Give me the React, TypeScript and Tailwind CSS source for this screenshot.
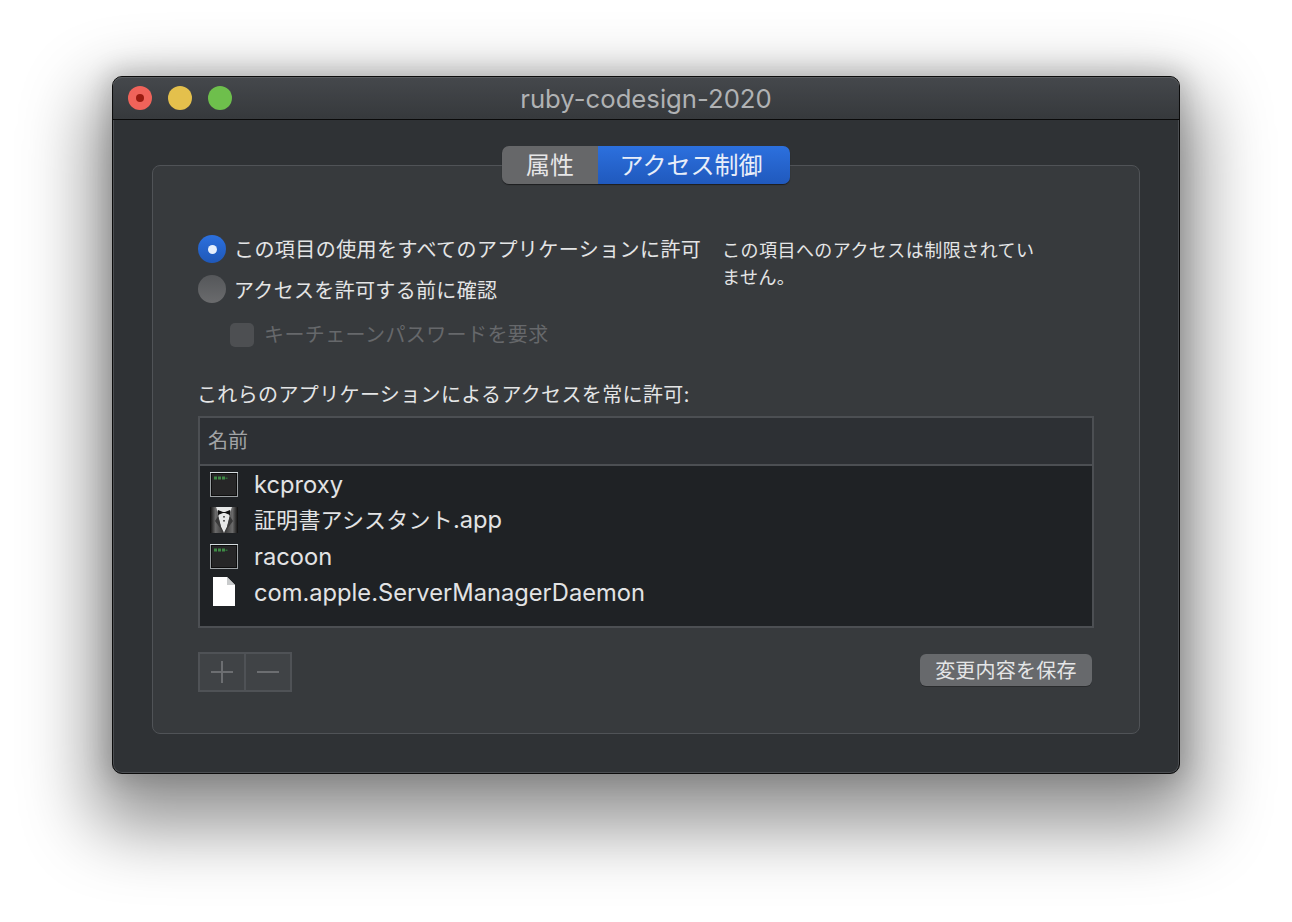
import type { ReactNode } from 'react'

const UI_FONT = 'font-["Inter","Noto_Sans_CJK_JP",sans-serif]'
const JP_FONT = 'font-["Noto_Sans_CJK_JP",sans-serif]'

function TerminalIcon() {
  return (
    <svg width="28" height="25" viewBox="0 0 28 25" className="shrink-0">
      <rect x="0.5" y="0.5" width="27" height="24" fill="#262627" stroke="#9ba0a3" />
      <path d="M0 0.5 H28" stroke="#d5dde0" />
      <rect x="1" y="1" width="26" height="1" fill="#0d0d0d" />
      <rect x="1" y="23" width="26" height="1" fill="#0d0d0d" />
      <rect x="1" y="2" width="1" height="21" fill="#0d0d0d" />
      <rect x="26" y="2" width="1" height="21" fill="#0d0d0d" />
      <path d="M4 4.5 h3 v3 h-3 Z M8 4.5 h3 v3 h-3 Z M12 4.5 h3 v3 h-3 Z" fill="#3f8a46" />
      <path d="M15.5 5.5 h2 v1.5 h-2 Z" fill="#2f6a38" />
    </svg>
  )
}

function TuxedoIcon() {
  return (
    <svg width="28" height="26" viewBox="0 0 28 26" className="shrink-0">
      <defs>
        <linearGradient id="suit" x1="0" x2="1" y1="0" y2="0">
          <stop offset="0" stopColor="#0c0c0c" />
          <stop offset="0.2" stopColor="#6b6b6b" />
          <stop offset="0.5" stopColor="#333" />
          <stop offset="0.8" stopColor="#6b6b6b" />
          <stop offset="1" stopColor="#0c0c0c" />
        </linearGradient>
      </defs>
      <rect width="28" height="26" fill="url(#suit)" />
      <path d="M6 0 H22 L17 20 L14 26 L11 20 Z" fill="#e6e8e8" />
      <path d="M6 0 L11 20 L14 26 L5 14 L9 8 Z" fill="#3a3a3a" />
      <path d="M22 0 L17 20 L14 26 L23 14 L19 8 Z" fill="#3a3a3a" />
      <path d="M8 3 L13 5 H15 L20 3 V8 L15 6 H13 L8 8 Z" fill="#121212" />
      <rect x="13.3" y="9" width="1.4" height="1.6" fill="#222" />
      <rect x="13.3" y="13" width="1.4" height="1.6" fill="#222" />
    </svg>
  )
}

function DocumentIcon() {
  return (
    <svg width="28" height="30" viewBox="0 0 28 30" className="shrink-0">
      <path d="M3 0 H17 L25 8 V29 H3 Z" fill="#ffffff" />
      <path d="M17 0 L25 8 H17 Z" fill="#c9cbcc" />
    </svg>
  )
}

function AppRow({
  icon,
  children,
  cjk = false,
}: {
  icon: ReactNode
  children: ReactNode
  cjk?: boolean
}) {
  return (
    <div className="flex h-9 items-center gap-[16px] pl-[10px]">
      <div className="flex w-[28px] items-center justify-center">{icon}</div>
      <span className={`${UI_FONT} ${cjk ? 'pb-[2px]' : 'pt-[2px]'} text-[23.7px] leading-none text-[#e2e3e4]`}>
        {children}
      </span>
    </div>
  )
}

export default function App() {
  return (
    <div className="h-[922px] w-[1292px] overflow-hidden bg-white pl-[112px] pt-[76px]">
      <div className="flex h-[698px] w-[1068px] flex-col rounded-[10px] border border-[#0c0c0c] bg-[#2f3235] shadow-[inset_0_0_0_1px_#4b4e52,0_34px_70px_20px_rgba(0,0,0,0.42),0_0_24px_6px_rgba(0,0,0,0.16)]">
        <div className="relative flex h-[43px] shrink-0 items-center gap-[16px] rounded-t-[9px] border-b border-[#0a0a0a] bg-gradient-to-b from-[#45484c] to-[#36393c] pl-[15px] shadow-[inset_0_1px_0_#5a5d60]">
          <div className="flex h-6 w-6 items-center justify-center rounded-full bg-[#f0635a]">
            <div className="h-2 w-2 rounded-full bg-[#9a1b10]" />
          </div>
          <div className="h-6 w-6 rounded-full bg-[#e4c04c]" />
          <div className="h-6 w-6 rounded-full bg-[#6ebf4c]" />
          <div className={`${UI_FONT} absolute inset-x-0 top-0 text-center text-[25.7px] leading-[43px] text-[#b0b2b4]`}>
            ruby-codesign-2020
          </div>
        </div>

        <div className="px-[39px] pt-[45px]">
          <div className="relative flex h-[569px] w-[988px] flex-col rounded-[8px] border border-[#505357] bg-[#373a3d] pl-[45px] pr-[45px] pt-[69px]">
            <div className={`${JP_FONT} absolute left-[349px] top-[-20px] flex h-[38px] w-[288px] overflow-hidden rounded-[7px] text-[24px] leading-none shadow-[0_1px_1px_rgba(0,0,0,0.5)]`}>
              <div className="flex w-[96px] items-center justify-center bg-[#666769] pb-[3px] text-[#e6e6e7]">属性</div>
              <div className="flex flex-1 items-center justify-center bg-gradient-to-b from-[#2c70de] to-[#2059bd] pb-[3px] pr-[6px] text-[#e8eef9]">
                アクセス制御
              </div>
            </div>

            <div className="flex">
              <div className="w-[525px] shrink-0">
                <div className="flex h-[28px] items-center gap-[8px]">
                  <div className="flex h-[28px] w-[28px] items-center justify-center rounded-full bg-gradient-to-b from-[#2c70de] to-[#1f58b8]">
                    <div className="h-[9px] w-[9px] rounded-full bg-[#e6effc]" />
                  </div>
                  <span className={`${JP_FONT} whitespace-nowrap text-[20px] leading-none tracking-[0.43px] text-[#e4e5e6]`}>
                    この項目の使用をすべてのアプリケーションに許可
                  </span>
                </div>
                <div className="mt-[12px] flex h-[28px] items-center gap-[8px]">
                  <div className="h-[28px] w-[28px] rounded-full bg-gradient-to-b from-[#55575a] to-[#6a6b6d]" />
                  <span className={`${JP_FONT} whitespace-nowrap pt-[2px] text-[20px] leading-none tracking-[0.33px] text-[#e4e5e6]`}>
                    アクセスを許可する前に確認
                  </span>
                </div>
                <div className="ml-[32px] mt-[20px] flex h-[24px] items-center gap-[10px]">
                  <div className="h-[24px] w-[24px] rounded-[5px] bg-[#4d4f52]" />
                  <span className={`${JP_FONT} whitespace-nowrap pb-[3px] text-[20px] leading-none tracking-[0.4px] text-[#66686b]`}>
                    キーチェーンパスワードを要求
                  </span>
                </div>
              </div>
              <p className={`${JP_FONT} -ml-[1px] w-[320px] pt-[1px] text-[18px] leading-[27px] tracking-[0.47px] text-[#e4e5e6]`}>
                この項目へのアクセスは制限されていません。
              </p>
            </div>

            <div className={`${JP_FONT} -ml-[1px] mt-[33px] text-[20px] leading-[28px] tracking-[0.36px] text-[#e4e5e6]`}>
              これらのアプリケーションによるアクセスを常に許可:
            </div>

            <div className="mt-[8px] h-[212px] border-2 border-[#4c4f53] bg-[#1f2225]">
              <div className={`${JP_FONT} flex h-[48px] items-center border-b-2 border-[#4c4f53] bg-[#2d3034] pb-[3px] pl-[8px] text-[20px] text-[#a2a4a6]`}>
                名前
              </div>
              <div>
                <AppRow icon={<TerminalIcon />}>kcproxy</AppRow>
                <AppRow icon={<TuxedoIcon />} cjk>
                  <span className={`${JP_FONT} text-[22px] tracking-[0.2px]`}>証明書アシスタント</span>.app
                </AppRow>
                <AppRow icon={<TerminalIcon />}>racoon</AppRow>
                <AppRow icon={<DocumentIcon />}>com.apple.ServerManagerDaemon</AppRow>
              </div>
            </div>

            <div className="mt-[24px] flex items-start justify-between">
              <div className="flex h-[40px] w-[94px] border-2 border-[#4f5256] bg-[#404346]">
                <div className="flex w-[46px] items-center justify-center border-r-2 border-[#4f5256]">
                  <svg width="22" height="22" viewBox="0 0 22 22">
                    <path d="M0 11 H22 M11 0 V22" stroke="#6c6e71" strokeWidth="2" />
                  </svg>
                </div>
                <div className="flex flex-1 items-center justify-center">
                  <svg width="22" height="22" viewBox="0 0 22 22">
                    <path d="M0 11 H22" stroke="#6c6e71" strokeWidth="2" />
                  </svg>
                </div>
              </div>
              <div className={`${JP_FONT} mr-[2px] mt-[2px] flex h-[32px] w-[172px] items-center justify-center rounded-[6px] bg-[#67696c] pb-[1px] text-[20px] leading-none tracking-[0.25px] text-[#e4e5e6] shadow-[0_1px_0_rgba(0,0,0,0.25)]`}>
                変更内容を保存
              </div>
            </div>
          </div>
        </div>
      </div>
    </div>
  )
}
